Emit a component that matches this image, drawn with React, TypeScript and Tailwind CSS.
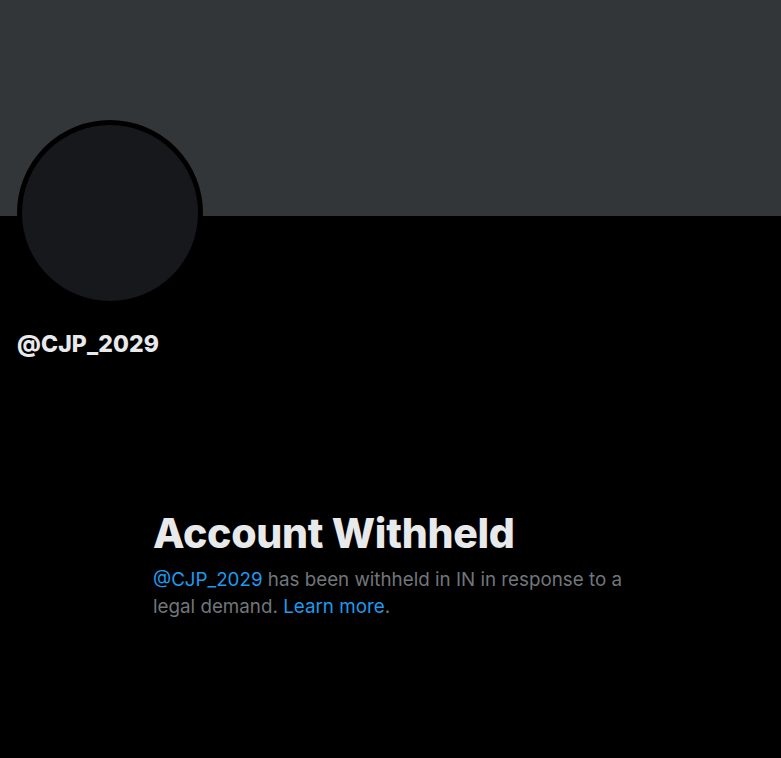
export default function App() {
  return (
    <div
      className="min-h-[758px] w-full bg-black"
      style={{ fontFamily: "Inter, 'Noto Sans', sans-serif" }}
    >
      {/* banner */}
      <div className="h-[216px] bg-[#333639]" />

      {/* avatar + handle */}
      <div className="px-[17px]">
        <div className="-mt-[96px] h-[186px] w-[186px] rounded-full border-[5px] border-black bg-[#16181c]" />
        <div className="mt-[24px] text-[23px] font-extrabold leading-[28px] tracking-[0.1px] text-[#e7e9ea]">
          @CJP_2029
        </div>
      </div>

      {/* withheld message */}
      <div className="mx-auto mt-[151px] w-[475px]">
        <h1 className="text-[41px] font-extrabold leading-[48px] tracking-[-0.3px] text-[#e7e9ea]">
          Account Withheld
        </h1>
        <p className="mt-[9px] text-[18.8px] leading-[27px] text-[#71767b]">
          <span className="text-[#1d9bf0]">@CJP_2029</span> has been withheld in IN in response to a legal demand.{" "}
          <span className="text-[#1d9bf0]">Learn more</span>.
        </p>
      </div>
    </div>
  );
}
